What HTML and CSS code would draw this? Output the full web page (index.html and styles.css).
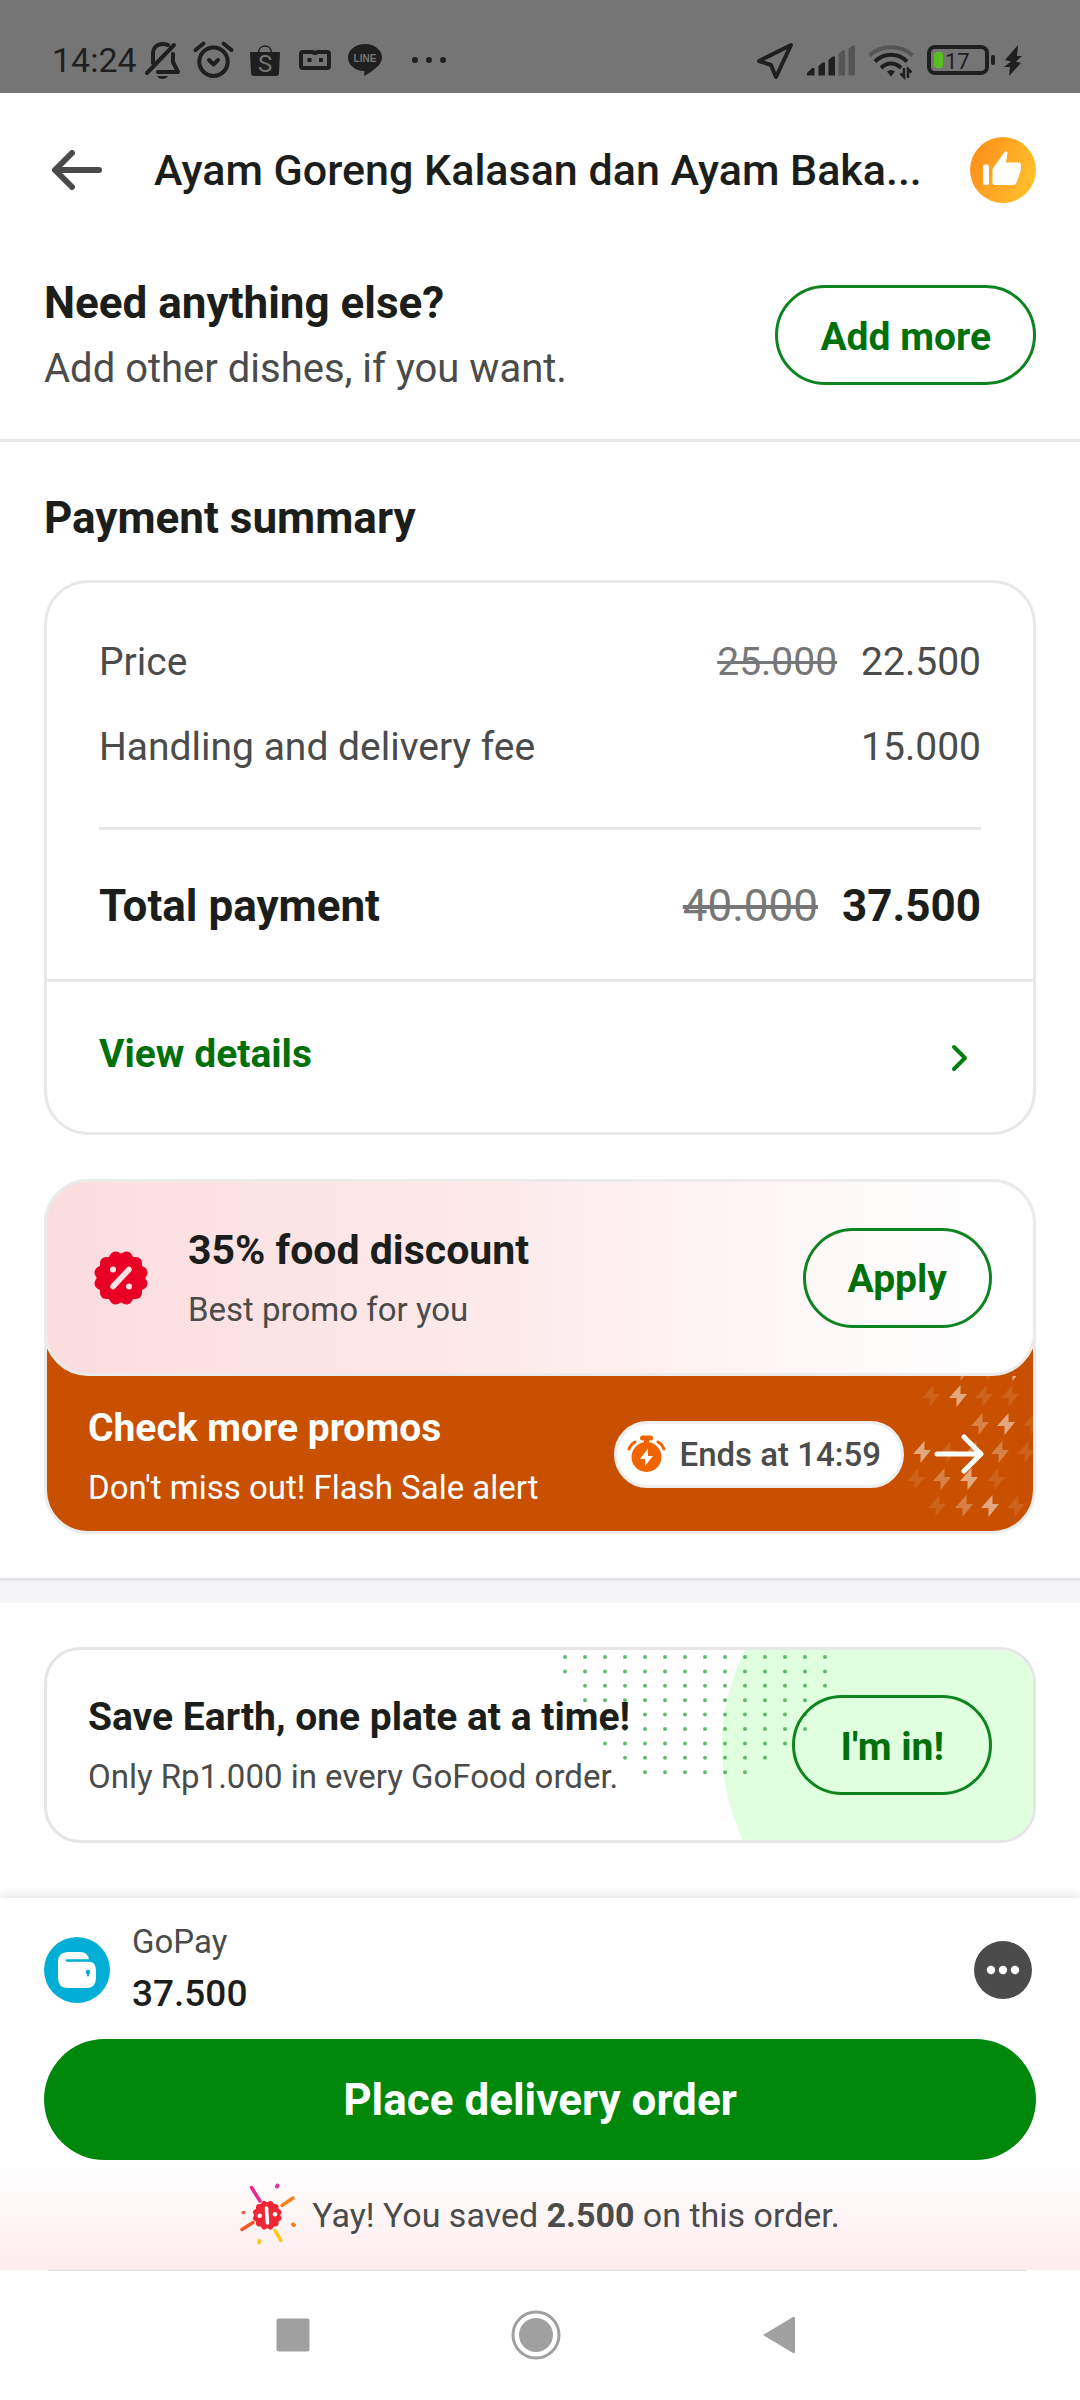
FILE: index.html
```html
<!DOCTYPE html>
<html lang="en">
<head>
<meta charset="utf-8">
<meta name="viewport" content="width=device-width, initial-scale=1">
<title>GoFood checkout</title>
<link rel="stylesheet" href="styles.css">
</head>
<body>
<div class="status">
  <span class="status-time">14:24</span>
  <div class="status-apps">
    <svg width="50" height="40" viewBox="0 0 50 40" fill="none" stroke="#1f1f1f" stroke-width="4" stroke-linecap="round" stroke-linejoin="round"><path d="M16 23V14c0-6 4-10 10-10 2 0 4 0 5 1M36 14v8l5 10H21M10 33 37 5"/><path d="M20 36h11c-2 4-9 4-11 0z" fill="#1f1f1f" stroke="none"/></svg>
    <svg width="50" height="40" viewBox="0 0 50 40" fill="none" stroke="#1f1f1f" stroke-width="4" stroke-linecap="round" stroke-linejoin="round"><circle cx="25.5" cy="21.7" r="14.2"/><path d="M21 20l4.5 4.500 4.500-4.500M7.500 10l8-6.500M35.500 3.500l8 6.500"/></svg>
    <svg width="50" height="40" viewBox="0 0 50 40"><path d="M11 12h30l-1 21q0 3-3 3H15q-3 0-3-3z" fill="#1f1f1f"/><path d="M19.500 12c1-8 12-8 13 0" fill="none" stroke="#1f1f1f" stroke-width="1.500"/><text x="26" y="32" text-anchor="middle" class="logo-s">S</text></svg>
    <svg width="50" height="40" viewBox="0 0 50 40" fill="none" stroke="#1f1f1f" stroke-width="4" stroke-linejoin="round"><path d="M22 12H13q-2 0-2 2v12q0 2 2 2h24q2 0 2-2V14q0-2-2-2H28l-3 1z"/><path d="M17.500 20h4M29 20h4"/></svg>
    <svg width="50" height="40" viewBox="0 0 50 40"><path d="M24 4c9.500 0 17 6 17 13.500 0 7-8 13-18 18.500l.5-5C14 31 7 25 7 17.500 7 10 14.500 4 24 4z" fill="#1f1f1f"/><text x="24" y="22" text-anchor="middle" class="logo-line">LINE</text></svg>
    <svg class="status-more" width="34" height="40" viewBox="0 0 34 40" fill="#1f1f1f"><circle cx="3" cy="20" r="3"/><circle cx="17" cy="20" r="3"/><circle cx="31" cy="20" r="3"/></svg>
  </div>
  <div class="status-system">
    <svg width="38" height="40" viewBox="0 0 38 40" fill="none" stroke="#1f1f1f" stroke-width="4" stroke-linejoin="round"><path d="M35 5 3 21l12 4 5 12z"/></svg>
    <svg width="48" height="40" viewBox="0 0 48 40" fill="#1f1f1f"><path d="M0 33l5-5h2.500v7.500H0zM11.500 26l4-3.500H18v13h-6.500zM21.500 20l4-3.500H28v19h-6.500z"/><path d="M31.500 14l4-3.500H38v25h-6.500zM41.500 9l4-3.500H48v30h-6.500z" fill="#555"/></svg>
    <svg width="46" height="40" viewBox="0 0 46 40" fill="none" stroke="#1f1f1f" stroke-width="4"><path d="M1.500 15.500c11-11 32-11 43 0" stroke="#555"/><path d="M7 21.500c9-9 23-9 32 0M13 28c6-6 14-6 20 0"/><path d="M19 31.500q4-3 8 0l-4 5z" fill="#1f1f1f" stroke="none"/><path d="M36 28v9l-3.500-3.500M40 38v-9l3.500 3.500" stroke-width="2.500"/></svg>
    <svg class="battery" width="68" height="40" viewBox="0 0 68 40"><rect x="2" y="7" width="58" height="26" rx="6" fill="none" stroke="#1f1f1f" stroke-width="4"/><rect x="64" y="15" width="4" height="10" rx="2" fill="#1f1f1f"/><rect x="7" y="12" width="9" height="16" rx="3" fill="#58be22"/><text x="18" y="29" class="battery-level">17</text></svg>
    <svg width="18" height="40" viewBox="0 0 18 40" fill="#1f1f1f"><path d="M14 5 1 20l6 1.500L0 27l6 0-1 9 12-13-5-1.500L18 16l-5 0z"/></svg>
  </div>
</div>

<header class="header">
  <button class="icon-button" type="button" aria-label="Back"><svg width="50" height="40" viewBox="0 0 50 40" fill="none" stroke="#4a4a4a" stroke-width="6" stroke-linecap="round" stroke-linejoin="round"><path d="M47 20H4M20 3 3 20l17 17"/></svg></button>
  <h1 class="header-title">Ayam Goreng Kalasan dan Ayam Baka...</h1>
  <svg class="thumb" width="66" height="66" viewBox="0 0 66 66"><defs><linearGradient id="sun" x1="0" y1="0.300" x2="1" y2="0.700"><stop offset="0" stop-color="#ff8f1c"/><stop offset="1" stop-color="#ffc22c"/></linearGradient></defs><circle cx="33" cy="33" r="33" fill="url(#sun)"/><rect x="13" y="27.500" width="6" height="20.500" rx="2" fill="#fff"/><path d="M22.500 32 35 14.500q1-1 2.500 1L36 25.500h12.500q2.500 0 2.500 2.500v5L46.500 45.500Q45.500 48 43 48H25q-2.500 0-2.500-2.500z" fill="#fff"/></svg>
</header>

<main class="content">
  <section class="more">
    <div class="stack">
      <h2 class="heading">Need anything else?</h2>
      <p class="body">Add other dishes, if you want.</p>
    </div>
    <button class="pill-button" type="button">Add more</button>
  </section>

  <section class="payment">
    <h2 class="heading">Payment summary</h2>
    <div class="card">
      <dl class="rows">
        <div class="row"><dt>Price</dt><dd><s>25.000</s><span>22.500</span></dd></div>
        <div class="row"><dt>Handling and delivery fee</dt><dd>15.000</dd></div>
      </dl>
      <dl class="total">
        <div class="row"><dt>Total payment</dt><dd><s>40.000</s><span>37.500</span></dd></div>
      </dl>
      <a class="details" href="#details"><span>View details</span><svg width="18" height="60" viewBox="0 0 18 60" fill="none" stroke="#00800f" stroke-width="4" stroke-linecap="round" stroke-linejoin="round"><path d="M3 23l11 11L3 45"/></svg></a>
    </div>

    <div class="promo">
      <div class="offer">
        <svg width="56" height="56" viewBox="0 0 56 56"><g fill="#ea0024"><rect x="7" y="7" width="42" height="42" rx="6"/><rect x="7" y="7" width="42" height="42" rx="6" transform="rotate(30 28 28)"/><rect x="7" y="7" width="42" height="42" rx="6" transform="rotate(60 28 28)"/></g><path d="M20 36.500 36 19.500" stroke="#fde4e6" stroke-width="5.500" stroke-linecap="round"/><circle cx="20" cy="19.500" r="3" fill="#fde4e6"/><circle cx="36" cy="36.500" r="3" fill="#fde4e6"/></svg>
        <div class="stack offer-text">
          <h3 class="title title-offer">35% food discount</h3>
          <p class="note">Best promo for you</p>
        </div>
        <button class="pill-button" type="button">Apply</button>
      </div>
      <a class="flash" href="#promos">
        <svg class="bolts" width="133" height="155" viewBox="0 0 133 155" fill="#fff">
          <defs><path id="bolt" d="M2.500-11-9 2h7.500v9L9-2H2.500z"/></defs>
          <g opacity="0.100"><use href="#bolt" x="88" y="-6"/><use href="#bolt" x="31" y="20"/><use href="#bolt" x="84" y="20"/><use href="#bolt" x="110" y="20"/><use href="#bolt" x="132" y="48"/><use href="#bolt" x="48" y="76"/><use href="#bolt" x="126" y="76"/><use href="#bolt" x="16" y="103"/><use href="#bolt" x="96" y="103"/><use href="#bolt" x="37" y="130"/><use href="#bolt" x="116" y="130"/></g>
          <g opacity="0.280"><use href="#bolt" x="62" y="-6"/><use href="#bolt" x="80" y="48"/><use href="#bolt" x="74" y="76"/><use href="#bolt" x="100" y="76"/><use href="#bolt" x="42" y="103"/><use href="#bolt" x="64" y="130"/></g>
          <g opacity="0.500"><use href="#bolt" x="114" y="-6"/><use href="#bolt" x="58" y="20"/><use href="#bolt" x="106" y="48"/><use href="#bolt" x="22" y="76"/><use href="#bolt" x="69" y="103"/><use href="#bolt" x="90" y="130"/></g>
        </svg>
        <span class="stack">
          <span class="title">Check more promos</span>
          <span class="note">Don't miss out! Flash Sale alert</span>
        </span>
        <span class="timer"><svg width="39" height="38" viewBox="0 0 39 38" fill="none" stroke="#f06400" stroke-linecap="round"><circle cx="19.500" cy="22" r="15" fill="#f06400" stroke="none"/><path d="M15.500 3h8" stroke-width="5"/><path d="M19.500 4v5" stroke-width="5"/><path d="M2 14q2-5 6-7M37 14q-2-5-6-7" stroke-width="3"/><path d="M21 13.500 13 24h5v7l8-10h-5z" fill="#fff" stroke="none"/></svg><span>Ends at 14:59</span></span>
        <svg class="flash-arrow" width="50" height="40" viewBox="0 0 50 40" fill="none" stroke="#fff" stroke-width="5" stroke-linecap="round" stroke-linejoin="round"><path d="M3 20h43M30 3l17 17-17 17"/></svg>
      </a>
    </div>
  </section>

  <section class="earth">
    <div class="earth-card">
      <div class="earth-art"><svg width="311" height="190" viewBox="0 0 311 190"><circle cx="216" cy="97" r="216" fill="#dfffdf"/></svg></div>
      <svg class="earth-dots" width="264" height="124" viewBox="0 0 264 124" stroke="#4aab55" stroke-opacity="0.850" stroke-width="4" stroke-linecap="round" stroke-dasharray="0 20"><path d="M2 4h261M2 18.400h261M22 32.800h241M22 47.200h221M42 61.600h201M42 76h201M42 90.400h181M62 104.800h141M82 119.200h101"/></svg>
      <div class="stack earth-text">
        <h3 class="title">Save Earth, one plate at a time!</h3>
        <p class="note">Only Rp1.000 in every GoFood order.</p>
      </div>
      <button class="pill-button" type="button">I'm in!</button>
    </div>
  </section>
</main>

<footer class="sheet">
  <div class="wallet">
    <svg width="66" height="66" viewBox="0 0 66 66"><circle cx="33" cy="33" r="33" fill="#00aed6"/><path d="M24 15h12q8 0 9 8l-2 4H14v-2q0-10 10-10z" fill="#fff"/><path d="M14 24h30q8 1 8 9v8q0 10-10 10H24Q14 51 14 41z" fill="#fff"/><path d="M23 23.500h23" stroke="#00aed6" stroke-width="2.500" stroke-linecap="round"/><circle cx="44" cy="35" r="2.300" fill="#00aed6"/><path d="M44 35v3.500" stroke="#00aed6" stroke-width="2" stroke-linecap="round"/></svg>
    <div class="wallet-text"><span class="note">GoPay</span><span class="amount">37.500</span></div>
    <button class="icon-button more-button" type="button" aria-label="Payment options"><svg width="58" height="58" viewBox="0 0 58 58"><circle cx="29" cy="29" r="29" fill="#4a4b4a"/><g fill="#fff"><circle cx="17" cy="29" r="4.200"/><circle cx="29" cy="29" r="4.200"/><circle cx="41" cy="29" r="4.200"/></g></svg></button>
  </div>
  <button class="order-button" type="button">Place delivery order</button>
  <div class="saved">
    <svg width="60" height="64" viewBox="0 0 60 64" fill="none" stroke-width="3.500" stroke-linecap="round"><path d="M11.500 4.500 20 18" stroke="#ee2a8f"/><path d="M42 22.500 53 15" stroke="#f58020"/><path d="M2 46.500 13 39.500" stroke="#f1592a"/><path d="M35 47.500 41 57.500" stroke="#fbc91b"/><g stroke-width="4"><path d="M37.500 2.500l-.5 1" stroke="#d63a9c"/><path d="M53 41.500l1 .5" stroke="#f58020"/><path d="M19.500 58l-.5 1.500" stroke="#fbc91b"/></g><path d="M3 29.500h1" stroke="#f1592a" stroke-width="3"/><g fill="#ee2737"><rect x="16" y="21" width="22.500" height="22.500" rx="3"/><rect x="16" y="21" width="22.500" height="22.500" rx="3" transform="rotate(30 27.250 32.250)"/><rect x="16" y="21" width="22.500" height="22.500" rx="3" transform="rotate(60 27.250 32.250)"/></g><path d="M26.500 25l1 15" stroke="#fff" stroke-width="3.500"/><circle cx="19.700" cy="32.700" r="2.200" fill="#fff"/><circle cx="35" cy="31.300" r="2.200" fill="#fff"/></svg>
    <p>Yay! You saved <strong>2.500</strong> on this order.</p>
  </div>
</footer>

<nav class="system-nav" aria-label="System">
  <button class="icon-button" type="button" aria-label="Recent apps"><svg width="34" height="34" viewBox="0 0 34 34"><rect x="0.500" y="0.500" width="33" height="33" rx="2" fill="#a0a0a0"/></svg></button>
  <button class="icon-button" type="button" aria-label="Home"><svg width="50" height="50" viewBox="0 0 50 50"><circle cx="25" cy="25" r="23" fill="none" stroke="#a0a0a0" stroke-width="3"/><circle cx="25" cy="25" r="17" fill="#a0a0a0"/></svg></button>
  <button class="icon-button" type="button" aria-label="Back"><svg width="34" height="38" viewBox="0 0 34 38"><path d="M1 19 31 1q2-.5 2 1v34q0 1.500-2 1z" fill="#a0a0a0"/></svg></button>
</nav>
</body>
</html>
```
FILE: styles.css
```css
*,
*::before {
  box-sizing: border-box;
}

body {
  display: flex;
  flex-direction: column;
  min-height: 100vh;
  margin: 0;
  background: #fff;
  color: #1c1e1c;
  font-family: Roboto, "Liberation Sans", sans-serif;
}

h1, h2, h3, p, dl, dd {
  margin: 0;
}

svg {
  display: block;
  flex: none;
}

button {
  font-family: inherit;
  cursor: pointer;
}

a {
  color: inherit;
  text-decoration: none;
}

.icon-button {
  padding: 0;
  border: 0;
  background: none;
}

/* Status bar */
.status {
  display: flex;
  align-items: center;
  height: 93px;
  padding: 27px 58px 0 52px;
  background: #757575;
  color: #1f1f1f;
}

.status-time {
  font-size: 34px;
  line-height: 40px;
}

.status-apps {
  display: flex;
  gap: 1px;
}

.status-more {
  margin-left: 20px;
}

.status-system {
  display: flex;
  gap: 13px;
  margin-left: auto;
}

.battery {
  margin-right: -4px;
}

.logo-s {
  fill: #757575;
  font: 24px Roboto, sans-serif;
}

.logo-line {
  fill: #757575;
  font: bold 10px "Liberation Sans", sans-serif;
}

.battery-level {
  fill: #1f1f1f;
  font: 22px Roboto, sans-serif;
}

/* Title bar */
.header {
  display: flex;
  align-items: center;
  height: 154px;
  padding: 0 44px 0 52px;
}

.header-title {
  flex: 1;
  padding-left: 52px;
  overflow: hidden;
  font-size: 43px;
  font-weight: 500;
  line-height: 60px;
  white-space: nowrap;
  text-overflow: ellipsis;
}

/* Shared text */
.stack {
  display: flex;
  flex-direction: column;
  gap: 8px;
}

.heading {
  font-size: 44px;
  font-weight: 700;
  line-height: 64px;
}

.body {
  color: #4a4b4a;
  font-size: 40px;
  line-height: 60px;
}

.title {
  font-size: 39px;
  font-weight: 700;
  line-height: 56px;
}

.title-offer {
  font-size: 41px;
}

.note {
  color: #4a4b4a;
  font-size: 33px;
  line-height: 48px;
}

.pill-button {
  flex: none;
  height: 100px;
  margin-left: auto;
  padding: 3px 42px 0;
  border: 3px solid #0e8420;
  border-radius: 50px;
  background: none;
  color: #00700a;
  font-size: 39px;
  font-weight: 700;
}

.content {
  flex: 1;
}

.more {
  display: flex;
  align-items: center;
  padding: 24px 44px 40px;
  border-bottom: 3px solid #e8e8e8;
}

.more .stack {
  gap: 4px;
}

/* Payment summary */
.payment {
  padding: 44px;
}

.card {
  margin-top: 30px;
  border: 3px solid #e8e8e8;
  border-radius: 44px;
}

.rows {
  display: flex;
  flex-direction: column;
  gap: 25px;
  margin: 0 52px;
  padding: 49px 0 50px;
  border-bottom: 3px solid #e8e8e8;
  color: #4a4b4a;
  font-size: 39px;
  line-height: 60px;
}

.row {
  display: flex;
  justify-content: space-between;
}

.row dd {
  display: flex;
  gap: 24px;
}

.row s {
  color: #777;
  font-weight: 400;
}

.total {
  padding: 44px 52px 41px;
  border-bottom: 3px solid #e8e8e8;
  font-size: 44px;
  font-weight: 700;
  line-height: 64px;
}

.details {
  display: flex;
  align-items: center;
  justify-content: space-between;
  padding: 42px 64px 48px 52px;
  color: #00700a;
  font-size: 39px;
  font-weight: 700;
  line-height: 60px;
}

/* Promos */
.promo {
  margin-top: 44px;
  border: 3px solid #ebebeb;
  border-radius: 44px;
  background: #c85000;
}

.offer {
  display: flex;
  align-items: center;
  height: 197px;
  margin: -3px -3px 0;
  padding: 0 41px 0 46px;
  border: 3px solid #ebebeb;
  border-radius: 44px;
  background: linear-gradient(90deg, #fbdcdf, #fdeaeb 45%, #fff 95%);
}

.offer-text {
  padding-left: 39px;
}

.flash {
  position: relative;
  display: flex;
  align-items: center;
  padding: 24px 49px 19px 41px;
  overflow: hidden;
  border-radius: 0 0 41px 41px;
  color: #fff;
}

.flash .note {
  color: #fff;
}

.flash .stack,
.timer,
.flash-arrow {
  position: relative;
}

.bolts {
  position: absolute;
  top: 0;
  right: 0;
}

.timer {
  display: flex;
  align-items: center;
  gap: 14px;
  height: 67px;
  margin: 0 30px 4px auto;
  padding: 0 20px 0 10px;
  border: 3px solid #eee;
  border-radius: 34px;
  background: #fff;
  color: #4a4b4a;
  font-size: 33px;
  font-weight: 500;
}

.flash-arrow {
  margin-bottom: 4px;
}

/* Donation card */
.earth {
  padding: 0 44px 55px;
}

.earth::before {
  content: "";
  display: block;
  height: 25px;
  margin: 0 -44px 44px;
  border-top: 3px solid #e4e4e9;
  background: #f5f5f8;
}

.earth-card {
  position: relative;
  display: flex;
  align-items: center;
  height: 196px;
  padding: 0 41px;
  border: 3px solid #e6e6e6;
  border-radius: 36px;
}

.earth-card .pill-button {
  position: relative;
  padding: 3px 45px 0;
}

.earth-art {
  position: absolute;
  top: 0;
  right: 0;
  overflow: hidden;
  border-radius: 0 33px 33px 0;
}

.earth-dots {
  position: absolute;
  top: 3px;
  right: 206px;
}

.earth-text {
  position: relative;
}

/* Checkout sheet */
.sheet {
  position: relative;
  padding-top: 20px;
  background: #fff;
  box-shadow: 0 -2px 10px rgba(0, 20, 10, 0.14);
}

.wallet {
  display: flex;
  align-items: center;
  gap: 22px;
  padding: 0 48px 17px 44px;
}

.wallet-text {
  display: flex;
  flex-direction: column;
}

.amount {
  font-size: 37px;
  font-weight: 500;
  line-height: 56px;
}

.more-button {
  margin-left: auto;
}

.order-button {
  display: block;
  width: calc(100% - 88px);
  height: 121px;
  margin: 0 44px;
  border: 0;
  border-radius: 61px;
  background: #00880c;
  color: #fff;
  font-size: 44px;
  font-weight: 700;
}

.saved {
  display: flex;
  align-items: center;
  justify-content: center;
  gap: 12px;
  height: 110px;
  background: linear-gradient(#fff, #fdecee);
  color: #4a4b4a;
  font-size: 34px;
  line-height: 48px;
}

.system-nav {
  position: relative;
  display: flex;
  align-items: center;
  justify-content: center;
  gap: 201px;
  height: 130px;
  padding-right: 8px;
  background: #fff;
}

.system-nav::before {
  content: "";
  position: absolute;
  top: 0;
  right: 54px;
  left: 48px;
  height: 1px;
  background: #dedee2;
}
```
